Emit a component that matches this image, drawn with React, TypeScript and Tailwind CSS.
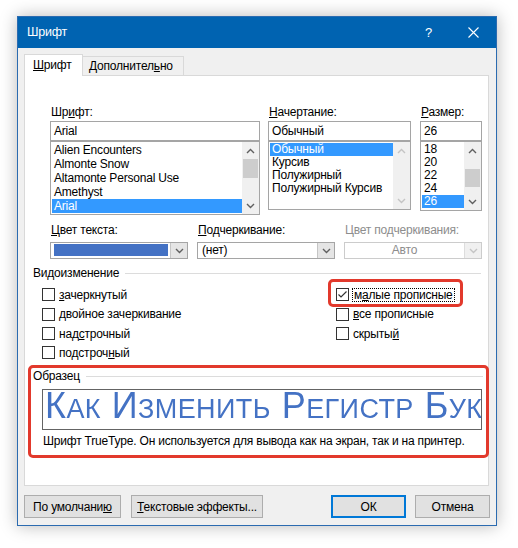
import React from "react";

const fonts = ["Alien Encounters", "Almonte Snow", "Altamonte Personal Use", "Amethyst", "Arial"];
const styles = ["Обычный", "Курсив", "Полужирный", "Полужирный Курсив"];
const sizes = ["18", "20", "22", "24", "26"];

function Chevron({ up = false, color = "#606060" }: { up?: boolean; color?: string }) {
  return (
    <svg width="9" height="6" viewBox="0 0 9 6">
      <polyline
        points={up ? "1,5 4.5,1.5 8,5" : "1,1 4.5,4.5 8,1"}
        fill="none"
        stroke={color}
        strokeWidth="1.4"
      />
    </svg>
  );
}

function ScrollBar({ thumbTop, thumbH, disabled = false }: { thumbTop?: string; thumbH?: string; disabled?: boolean }) {
  const c = disabled ? "#c4c4c4" : "#606060";
  return (
    <div className="w-[17px] h-full bg-[#f0f0f0] flex flex-col">
      <div className="h-[17px] flex items-center justify-center">
        <Chevron up color={c} />
      </div>
      <div className="flex-1">
        {!disabled && <div className={`bg-[#cdcdcd] mx-[1px] ${thumbTop} ${thumbH}`} />}
      </div>
      <div className="h-[17px] flex items-center justify-center">
        <Chevron color={c} />
      </div>
    </div>
  );
}

function CheckBox({ checked = false }: { checked?: boolean }) {
  return (
    <div className="w-[13px] h-[13px] border border-[#333333] bg-white flex items-center justify-center shrink-0">
      {checked && (
        <svg width="11" height="11" viewBox="0 0 11 11">
          <polyline points="1.5,5.5 4,8 9.5,2.5" fill="none" stroke="#333333" strokeWidth="1.2" />
        </svg>
      )}
    </div>
  );
}

export default function App() {
  return (
    <div className="w-[518px] h-[548px] bg-white pt-[16px] pl-[17px] font-['Liberation_Sans',Arial,sans-serif] text-[12px] tracking-[-0.2px] text-black">
      <div className="w-[480px] h-[510px] border border-[#2b6bb0] bg-[#f0f0f0] shadow-[0_0_16px_rgba(0,0,0,0.28)] flex flex-col">
        {/* title bar */}
        <div className="h-[31px] bg-[#0063b1] text-white flex items-center pl-[9px]">
          <span className="flex-1 text-[12.5px]">Шрифт</span>
          <div className="w-[45px] flex justify-center text-[13px]">?</div>
          <div className="w-[45px] flex justify-center">
            <svg width="11" height="11" viewBox="0 0 11 11">
              <path d="M0.5 0.5 L10.5 10.5 M10.5 0.5 L0.5 10.5" stroke="white" strokeWidth="1.1" />
            </svg>
          </div>
        </div>

        <div className="px-[6px] pt-[6px]">
          {/* tabs */}
          <div className="h-[21px] flex items-start">
            <div className="relative z-10 h-[22px] w-[59px] px-[8px] border border-b-0 border-[#d9d9d9] bg-white leading-[20px]">
              <span className="underline">Ш</span>рифт
            </div>
            <div className="mt-[2px] h-[19px] w-[101px] px-[6px] border border-l-0 border-b-0 border-[#d9d9d9] bg-[#f0f0f0] leading-[18px] whitespace-nowrap">
              Дополнител<span className="underline">ь</span>но
            </div>
          </div>

          {/* panel */}
          <div className="relative w-[465px] h-[411px] border border-[#d9d9d9] bg-white">
            <div className="pl-[25px] pt-[28px] flex items-start">
              {/* font */}
              <div className="w-[210px]">
                <div className="h-[17px] leading-[17px] pl-px">
                  Шр<span className="underline">и</span>фт:
                </div>
                <div className="h-[20px] border border-[#a5a5a5] px-[3px] leading-[18px]">Arial</div>
                <div className="h-[74px] border border-[#a5a5a5] flex">
                  <div className="flex-1 pl-px pt-px">
                    {fonts.map((f) => (
                      <div
                        key={f}
                        className={`h-[14px] leading-[14px] px-[2px] ${f === "Arial" ? "bg-[#3399ff] text-white" : ""}`}
                      >
                        {f}
                      </div>
                    ))}
                  </div>
                  <ScrollBar thumbTop="mt-0" thumbH="h-[19px]" />
                </div>
              </div>

              {/* style */}
              <div className="w-[143px] ml-[8px]">
                <div className="h-[17px] leading-[17px] pl-px">
                  <span className="underline">Н</span>ачертание:
                </div>
                <div className="h-[20px] border border-[#a5a5a5] px-[3px] leading-[18px]">Обычный</div>
                <div className="h-[69px] border border-[#a5a5a5] flex">
                  <div className="flex-1 pl-px pt-px">
                    {styles.map((s) => (
                      <div
                        key={s}
                        className={`h-[13px] leading-[13px] px-[2px] whitespace-nowrap ${s === "Обычный" ? "bg-[#3399ff] text-white" : ""}`}
                      >
                        {s}
                      </div>
                    ))}
                  </div>
                  <ScrollBar disabled />
                </div>
              </div>

              {/* size */}
              <div className="w-[62px] ml-[9px]">
                <div className="h-[17px] leading-[17px] pl-px">
                  <span className="underline">Р</span>азмер:
                </div>
                <div className="h-[20px] border border-[#a5a5a5] px-[3px] leading-[18px]">26</div>
                <div className="h-[70px] border border-[#a5a5a5] flex">
                  <div className="flex-1 pl-px pt-px">
                    {sizes.map((s) => (
                      <div
                        key={s}
                        className={`h-[13px] leading-[13px] px-[2px] ${s === "26" ? "bg-[#3399ff] text-white" : ""}`}
                      >
                        {s}
                      </div>
                    ))}
                  </div>
                  <ScrollBar thumbTop="mt-[10px]" thumbH="h-[18px]" />
                </div>
              </div>
            </div>

            {/* colours row */}
            <div className="pl-[25px] mt-[7px] flex gap-[9px]">
              <div className="w-[138px]">
                <div className="h-[17px] leading-[17px] pl-px">
                  <span className="underline">Ц</span>вет текста:
                </div>
                <div className="mt-[3px] h-[17px] border border-[#a5a5a5] flex">
                  <div className="flex-1 pl-[3px] pt-px">
                    <div className="w-[114px] h-[12px] bg-[#4472c4]" />
                  </div>
                  <div className="w-[17px] bg-[#e5e5e5] border-l border-[#c5c5c5] flex items-center justify-center">
                    <Chevron />
                  </div>
                </div>
              </div>
              <div className="w-[138px]">
                <div className="h-[17px] leading-[17px] pl-px">
                  <span className="underline">П</span>одчеркивание:
                </div>
                <div className="mt-[3px] h-[17px] border border-[#a5a5a5] flex">
                  <div className="flex-1 px-[4px] leading-[15px]">(нет)</div>
                  <div className="w-[17px] bg-[#e5e5e5] border-l border-[#c5c5c5] flex items-center justify-center">
                    <Chevron />
                  </div>
                </div>
              </div>
              <div className="w-[138px]">
                <div className="h-[17px] leading-[17px] pl-px text-[#8d8d8d]">Цвет подчеркивания:</div>
                <div className="mt-[3px] h-[17px] border border-[#cccccc] flex">
                  <div className="flex-1 text-center leading-[15px] text-[#8d8d8d]">Авто</div>
                  <div className="w-[17px] bg-[#f0f0f0] border-l border-[#dddddd] flex items-center justify-center">
                    <Chevron color="#c4c4c4" />
                  </div>
                </div>
              </div>
            </div>

            {/* effects */}
            <div className="pl-[8px] mr-[7px] mt-[6px] h-[16px] flex items-center">
              <span className="leading-[16px]">Видоизменение</span>
              <div className="flex-1 h-px bg-[#dcdcdc] ml-[6px]" />
            </div>
            <div className="pl-[17px] mt-[4px] grid grid-cols-[294px_1fr]">
              <div>
                <div className="h-[19px] flex items-center gap-[4px]">
                  <CheckBox />
                  <span>
                    <span className="underline">з</span>ачеркнутый
                  </span>
                </div>
                <div className="h-[20px] flex items-center gap-[4px]">
                  <CheckBox />
                  <span>
                    <span className="underline">д</span>войное зачеркивание
                  </span>
                </div>
                <div className="h-[19px] flex items-center gap-[4px]">
                  <CheckBox />
                  <span>
                    над<span className="underline">с</span>трочный
                  </span>
                </div>
                <div className="h-[19px] flex items-center gap-[4px]">
                  <CheckBox />
                  <span>
                    подстроч<span className="underline">н</span>ый
                  </span>
                </div>
              </div>
              <div>
                <div className="h-[19px] flex items-center gap-[3px]">
                  <CheckBox checked />
                  <span className="border border-dotted border-black px-px leading-[12px]">
                    м<span className="underline">а</span>лые прописные
                  </span>
                </div>
                <div className="h-[20px] flex items-center gap-[4px]">
                  <CheckBox />
                  <span>
                    <span className="underline">в</span>се прописные
                  </span>
                </div>
                <div className="h-[19px] flex items-center gap-[4px]">
                  <CheckBox />
                  <span>
                    скрыты<span className="underline">й</span>
                  </span>
                </div>
              </div>
            </div>

            {/* sample */}
            <div className="pl-[8px] mr-[5px] mt-[6px] h-[16px] flex items-center">
              <span className="leading-[16px]">Образец</span>
              <div className="flex-1 h-px bg-[#dcdcdc] ml-[6px]" />
            </div>
            <div className="ml-[17px] mt-[5px] w-[440px] h-[41px] border border-[#646464] overflow-hidden whitespace-nowrap pl-[2px] pt-[1px]">
              <span className="inline-block tracking-[0.4px] [word-spacing:3px] font-['Liberation_Sans',sans-serif] uppercase text-[#4472c4] leading-[29px] [-webkit-box-reflect:below_-1px_linear-gradient(transparent_35%,rgba(255,255,255,0.75))]">
                <span className="text-[36px]">К</span>
                <span className="text-[27px]">ак </span>
                <span className="text-[36px]">И</span>
                <span className="text-[27px]">зменить </span>
                <span className="text-[36px]">Р</span>
                <span className="text-[27px]">егистр </span>
                <span className="text-[36px]">Б</span>
                <span className="text-[27px]">укв</span>
              </span>
            </div>
            <div className="pl-[18px] mt-[3px] h-[16px] leading-[16px] whitespace-nowrap">
              Шрифт TrueType. Он используется для вывода как на экран, так и на принтер.
            </div>

            {/* annotations */}
            <div className="absolute left-[303px] top-[203px] w-[135px] h-[28px] border-[3px] border-[#e2392c] rounded-[5px]" />
            <div className="absolute left-[3px] top-[289px] w-[461px] h-[93px] border-[3px] border-[#e2392c] rounded-[5px]" />
          </div>

          {/* buttons */}
          <div className="mt-[9px] flex">
            <div className="w-[97px] h-[23px] border border-[#adadad] bg-[#e1e1e1] flex items-center justify-center">
              <span>
                По умолчани<span className="underline">ю</span>
              </span>
            </div>
            <div className="ml-[10px] w-[132px] h-[23px] border border-[#adadad] bg-[#e1e1e1] flex items-center justify-center">
              <span>
                <span className="underline">Т</span>екстовые эффекты...
              </span>
            </div>
            <div className="ml-[68px] w-[75px] h-[23px] border-2 border-[#0078d7] bg-[#e1e1e1] flex items-center justify-center">
              ОК
            </div>
            <div className="ml-[9px] w-[75px] h-[23px] border border-[#adadad] bg-[#e1e1e1] flex items-center justify-center">
              Отмена
            </div>
          </div>
        </div>
      </div>
    </div>
  );
}
